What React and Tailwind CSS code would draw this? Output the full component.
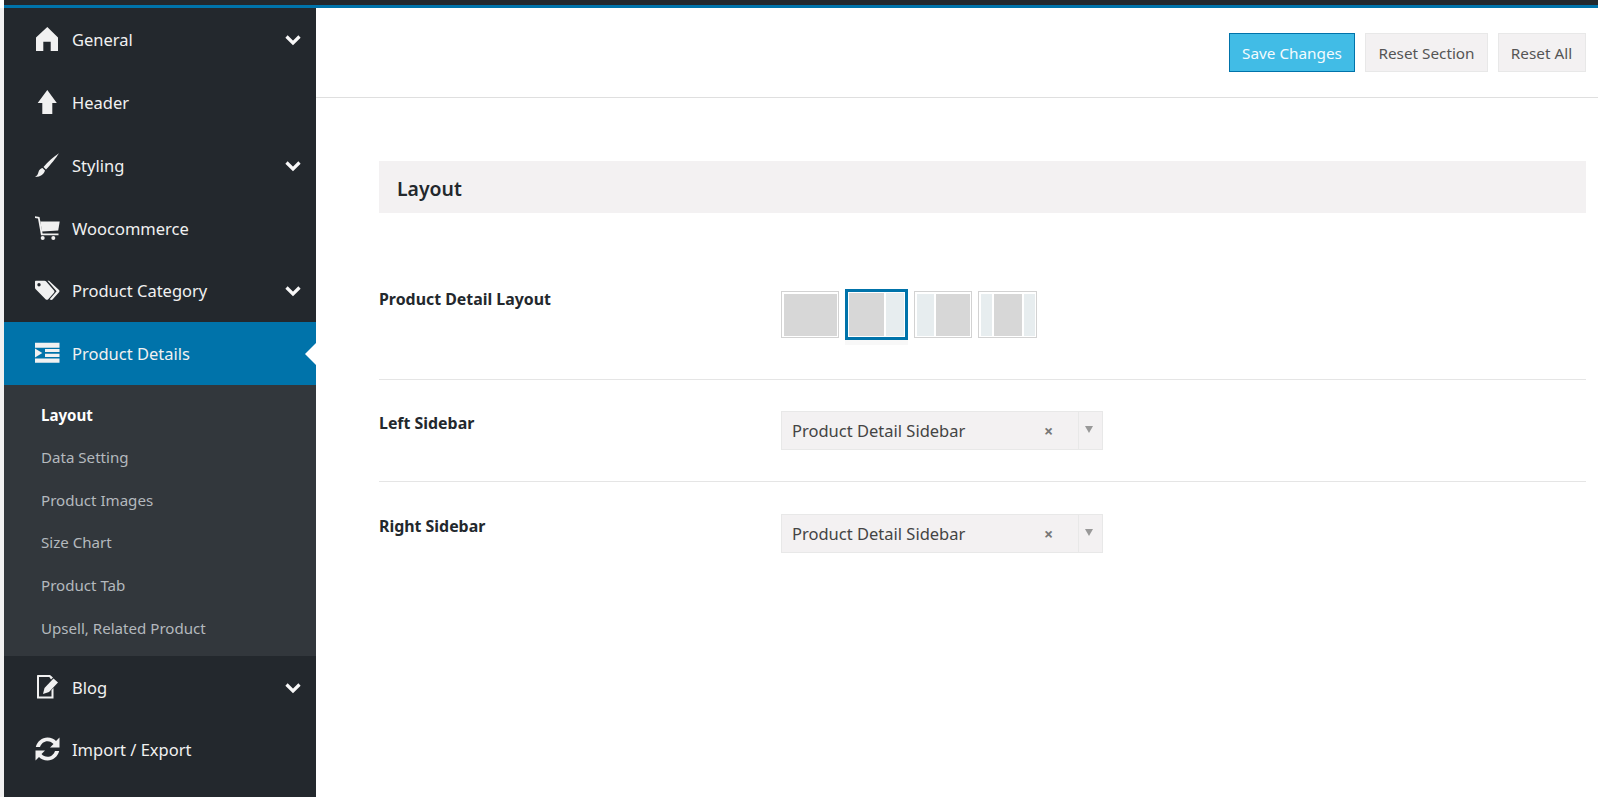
import React from "react";

const I = ({ children }) => (
  <svg viewBox="0 0 26 26" className="w-[26px] h-[26px] shrink-0" fill="#f1f1f1">{children}</svg>
);

const Home = () => (
  <I><path d="M12.3 0 L23 10.5 V24 H15.7 V14.7 H8.3 V24 H1 V10.5 Z" /></I>
);
const Up = () => (
  <I><path d="M12.3 0 L21.8 13 H17.3 V24 H7.3 V13 H2.7 Z" /></I>
);
const Brush = () => (
  <I><path d="M24 0.3 C21 5 15.5 12 11 16.5 L8.5 14 C13 8.5 19 3.5 24 0.3 Z M7.5 15 L10 17.5 C9 21 6 24 0 24 C2 23 3 21 3.5 19 C4 17 5.5 15.5 7.5 15 Z" /></I>
);
const Cart = () => (
  <I>
    <path d="M0 1.2 L4.5 2 L7.6 18.5 H23.5 V20.2 H6 L3 3.4 L0 2.9 Z" />
    <path d="M5.3 6.5 H24.7 L23.2 15.5 L7 16.5 Z" />
    <circle cx="7.7" cy="23" r="2" />
    <circle cx="18.3" cy="23" r="2" />
  </I>
);
const Tags = () => (
  <I>
    <path fillRule="evenodd" d="M1 2.7 H9.5 C10.2 2.7 10.8 3 11.2 3.4 L19 12.5 C19.6 13.2 19.6 14.1 19 14.7 L13 21.4 C12.4 22 11.4 22 10.8 21.4 L1 11.5 C0.4 11 0 10.4 0 9.8 V3.7 C0 3.1 0.4 2.7 1 2.7 Z M4 5 A1.7 1.7 0 1 0 4 8.4 A1.7 1.7 0 1 0 4 5 Z" />
    <path d="M12.5 2.7 H14 L24 12 C24.6 12.6 24.6 13.6 24 14.2 L17.5 21.4 C17 22 16 22 15 21.6 L14.7 21.3 L21.6 13.3 Z" />
  </I>
);
const Indent = () => (
  <I><path d="M0 1.7 H24.5 V6.7 H0 Z M0 7.5 L7.3 12 L0 16.5 Z M10 8 H24.5 V11 H10 Z M10 12.8 H24.5 V16 H10 Z M0 17.5 H24.5 V21.7 H0 Z" /></I>
);
const Edit = () => (
  <I>
    <path d="M3 0 H15 L18 2.5 L16 4.5 L14.3 2 H4 V21.5 H16.5 V15 L18.5 13 V23.5 H2 V1 C2 0.4 2.4 0 3 0 Z" />
    <path d="M18.5 3.5 L23 7.5 L14 17 L8 19 L9.5 13 Z" />
  </I>
);
const Refresh = () => (
  <I><path d="M12.5 0.5 C16 0.5 19 1.8 21 4 L24.5 0.5 V10.5 H15 L18.5 7 C17 5.3 15 4.2 12.5 4.2 C9 4.2 6.2 6.5 5 10 H0.8 C2.2 4.5 7 0.5 12.5 0.5 Z M0.5 13.5 H10 L6.5 17 C8 18.8 10 19.8 12.5 19.8 C16 19.8 18.8 17.5 20 14 H24.2 C22.8 19.5 18 23.5 12.5 23.5 C9 23.5 6 22.2 4 20 L0.5 23.5 Z" /></I>
);

const Chevron = () => (
  <svg viewBox="0 0 16 12" className="w-[16px] h-[12px]" fill="none" stroke="#f8f8f8" strokeWidth="3.2"><path d="M1.5 2.5 L8 9 L14.5 2.5" /></svg>
);

const Item = ({ icon, label, chevron, active }) => (
  <div className={`relative flex items-center h-[62.7px] pl-[31px] pr-[15px] ${active ? "bg-[#0073aa]" : ""}`}>
    {icon}
    <span className="ml-[11px] pt-[1px] flex-1 text-[16.5px] text-[#f1f1f1]">{label}</span>
    {chevron && <Chevron />}
    {active && (
      <span className="absolute right-0 top-1/2 -translate-y-1/2 w-0 h-0 border-y-[11px] border-y-transparent border-r-[11px] border-r-white" />
    )}
  </div>
);

const Sub = ({ label, active }) => (
  <div className={`h-[42.6px] flex items-center pl-[37px] text-[15.1px] ${active ? "text-white font-bold" : "text-[#b4b9be]"}`}>{label}</div>
);

const Tile = ({ children, active, w = "w-[58px]" }) => (
  <div className={active ? "w-[63px] h-[51px] bg-white border-[3px] border-[#0073aa] shadow-[0_5px_0_#f8f8f8]" : `mt-[2px] ${w} h-[47px] bg-white border border-[#d2d2d2]`}>
    <div className={`flex h-full gap-[2px] ${active ? "p-[1px]" : "p-[1.5px]"}`}>{children}</div>
  </div>
);
const Main = ({ w }) => <div className={`bg-[#d7d7d7] ${w}`} />;
const Side = ({ w }) => <div className={`bg-[#e7edef] ${w}`} />;

const Select = () => (
  <div className="flex items-center w-[322px] h-[39px] bg-[#f3f1f2] border border-[#e8e8e8] text-[16.5px] text-[#444]">
    <span className="pl-[10px] pt-[1px] flex-1">Product Detail Sidebar</span>
    <span className="w-[34px] text-[#777] text-[16px] font-bold text-left">×</span>
    <span className="w-[24px] h-full border-l border-[#e8e8e8] flex items-center justify-center pb-[2px] pr-[3px]">
      <span className="w-0 h-0 border-x-[4px] border-x-transparent border-t-[7px] border-t-[#999]" />
    </span>
  </div>
);

const Row = ({ label, children, border, h, labelClass = "" }) => (
  <div className={`flex ${h} ${border ? "border-b border-[#e5e5e5]" : ""}`}>
    <div className={`w-[402px] pt-[1px] text-[15.9px] font-bold text-[#23282d] ${labelClass}`}>{label}</div>
    <div>{children}</div>
  </div>
);

export default function App() {
  return (
    <div className="w-[1598px] h-[797px] overflow-hidden bg-white flex flex-col" style={{ fontFamily: '"Noto Sans", sans-serif' }}>
      <div className="h-[5px] ml-[4px] bg-[#23282d]" />
      <div className="h-[3px] ml-[4px] bg-[#0073aa]" />
      <div className="flex flex-1 min-h-0">
        <div className="w-[4px] bg-[#f1f1f1]" />
        <div className="w-[312px] bg-[#23282d] flex flex-col pt-[1px]">
          <Item icon={<Home />} label="General" chevron />
          <Item icon={<Up />} label="Header" />
          <Item icon={<Brush />} label="Styling" chevron />
          <Item icon={<Cart />} label="Woocommerce" />
          <Item icon={<Tags />} label="Product Category" chevron />
          <Item icon={<Indent />} label="Product Details" active />
          <div className="bg-[#32373c] pt-[8.5px] pb-[7px]">
            <Sub label="Layout" active />
            <Sub label="Data Setting" />
            <Sub label="Product Images" />
            <Sub label="Size Chart" />
            <Sub label="Product Tab" />
            <Sub label="Upsell, Related Product" />
          </div>
          <Item icon={<Edit />} label="Blog" chevron />
          <Item icon={<Refresh />} label="Import / Export" />
        </div>
        <div className="flex-1 flex flex-col">
          <div className="h-[90px] border-b border-[#dfdfdf] flex justify-end items-start gap-[10px] pt-[25px] pr-[12px] text-[15.3px]">
            <button className="h-[39px] w-[126px] pt-[1px] bg-[#41bce6] border border-[#0073aa] text-[#f4fbfe]">Save Changes</button>
            <button className="h-[39px] w-[123px] pt-[1px] bg-[#f3f1f2] border border-[#e8e8e8] text-[#555]">Reset Section</button>
            <button className="h-[39px] w-[88px] pt-[1px] pr-[1px] bg-[#f3f1f2] border border-[#e8e8e8] text-[#555]">Reset All</button>
          </div>
          <div className="pl-[63px] pr-[12px] pt-[63px]">
            <div className="h-[52px] bg-[#f3f1f2] flex items-center pl-[18px] pt-[3px] text-[19.4px] font-semibold text-[#23282d]">Layout</div>
            <div className="pt-[76px]">
              <Row label="Product Detail Layout" border h="h-[91px]" labelClass="-mt-[2px]">
                <div className="flex items-start gap-[6px]">
                  <Tile><Main w="flex-1" /></Tile>
                  <Tile active><Main w="w-[35px]" /><Side w="flex-1" /></Tile>
                  <Tile><Side w="w-[17px]" /><Main w="flex-1" /></Tile>
                  <Tile w="w-[59px]"><Side w="w-[11px]" /><Main w="flex-1" /><Side w="w-[11px]" /></Tile>
                </div>
              </Row>
              <Row label="Left Sidebar" border h="h-[102px] pt-[31px]"><Select /></Row>
              <Row label="Right Sidebar" h="pt-[32px]"><Select /></Row>
            </div>
          </div>
        </div>
      </div>
    </div>
  );
}
